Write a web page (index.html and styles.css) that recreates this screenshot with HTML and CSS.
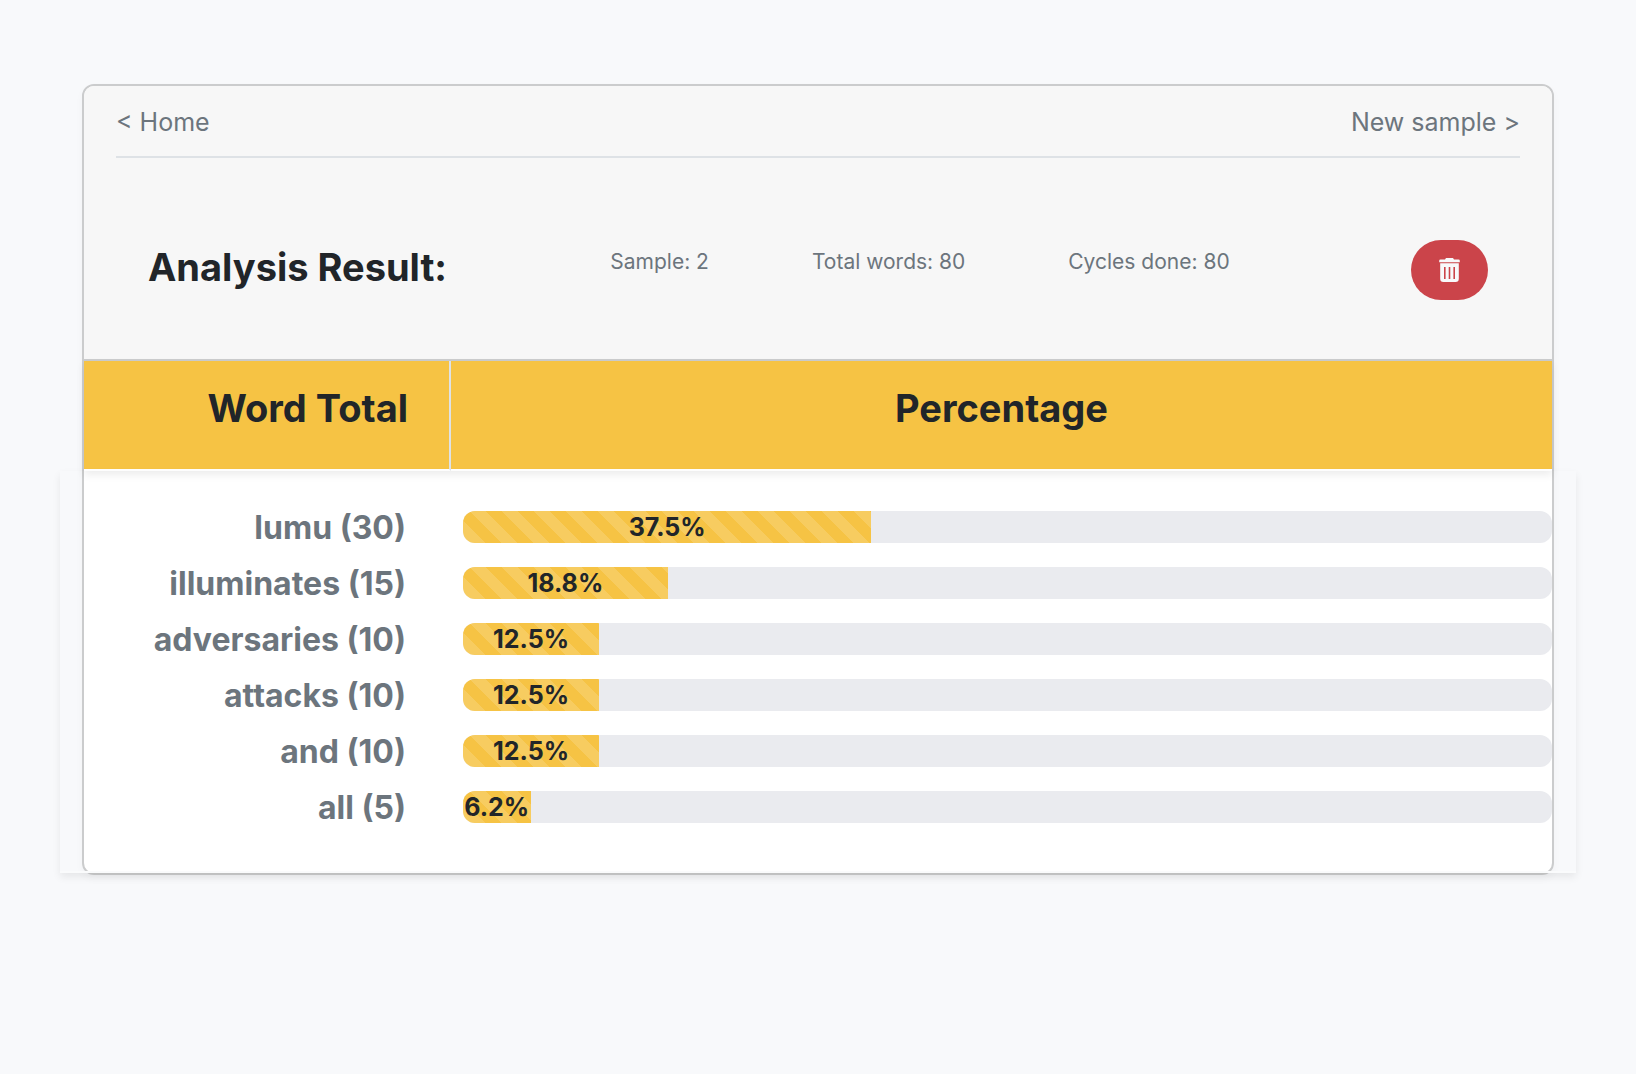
FILE: index.html
```html
<!DOCTYPE html>
<html lang="en">
<head>
  <meta charset="utf-8">
  <meta name="viewport" content="width=device-width, initial-scale=1">
  <title>Analysis Result</title>
  <link rel="stylesheet" href="styles.css">
</head>
<body>
  <main class="card">
    <header class="card-header">
      <nav class="nav">
        <a class="nav-link" href="#home">&lt; Home</a>
        <a class="nav-link" href="#new">New sample &gt;</a>
      </nav>
      <div class="summary">
        <h1 class="title">Analysis Result:</h1>
        <ul class="stats">
          <li>Sample: 2</li>
          <li>Total words: 80</li>
          <li>Cycles done: 80</li>
        </ul>
        <button class="delete" type="button" aria-label="Delete sample">
          <svg class="delete-icon" viewBox="0 0 21 24" aria-hidden="true">
            <path fill="currentColor" d="M1.500 1.500H6L7 0h7l1 1.500h4.500a1.300 1.300 0 0 1 1.300 1.300v1.400H.2V2.800a1.300 1.300 0 0 1 1.300-1.300z"/>
            <path fill="currentColor" fill-rule="evenodd" d="M1.200 5.300h18.600v15.500a3.200 3.200 0 0 1-3.200 3.200H4.400a3.200 3.200 0 0 1-3.200-3.200zM5 9v12h1.600V9zM9.700 9v12h1.600V9zM14.400 9v12H16V9z"/>
          </svg>
        </button>
      </div>
    </header>
    <table class="results">
      <thead>
        <tr>
          <th class="head head-word" scope="col">Word Total</th>
          <th class="head" scope="col">Percentage</th>
        </tr>
      </thead>
      <tbody>
        <tr>
          <th class="word" scope="row">lumu (30)</th>
          <td class="share"><div class="track"><div class="bar" style="width: 37.5%">37.5%</div></div></td>
        </tr>
        <tr>
          <th class="word" scope="row">illuminates (15)</th>
          <td class="share"><div class="track"><div class="bar" style="width: 18.8%">18.8%</div></div></td>
        </tr>
        <tr>
          <th class="word" scope="row">adversaries (10)</th>
          <td class="share"><div class="track"><div class="bar" style="width: 12.5%">12.5%</div></div></td>
        </tr>
        <tr>
          <th class="word" scope="row">attacks (10)</th>
          <td class="share"><div class="track"><div class="bar" style="width: 12.5%">12.5%</div></div></td>
        </tr>
        <tr>
          <th class="word" scope="row">and (10)</th>
          <td class="share"><div class="track"><div class="bar" style="width: 12.5%">12.5%</div></div></td>
        </tr>
        <tr>
          <th class="word" scope="row">all (5)</th>
          <td class="share"><div class="track"><div class="bar" style="width: 6.2%">6.2%</div></div></td>
        </tr>
      </tbody>
    </table>
  </main>
</body>
</html>
```

FILE: styles.css
```css
* {
  box-sizing: border-box;
}

body {
  margin: 0;
  padding: 84px 82px;
  background: #f8f9fb;
  color: #212529;
  font-family: Inter, "Liberation Sans", sans-serif;
}

.card {
  border: 2px solid #cbcccd;
  border-radius: 12px;
  background: #fff;
  box-shadow: 0 4px 8px rgba(0, 0, 0, 0.03);
}

.card-header {
  padding: 0 32px;
  border-bottom: 2px solid #cbcccd;
  border-radius: 10px 10px 0 0;
  background: #f7f7f7;
}

.nav {
  display: flex;
  justify-content: space-between;
  padding: 16px 0 14px;
  border-bottom: 2px solid #dee2e6;
}

.nav-link {
  color: #6c757d;
  font-size: 25px;
  line-height: 40px;
  text-decoration: none;
}

.summary {
  display: grid;
  grid-template-columns: 69fr 116fr 15fr;
  align-items: center;
  padding: 82px 32px 59px;
}

.title {
  margin: 0;
  padding-bottom: 6px;
  font-size: 38px;
  font-weight: 700;
  line-height: 48px;
  white-space: nowrap;
}

.stats {
  display: flex;
  gap: 103px;
  margin: 0;
  padding: 0 0 16px;
  list-style: none;
  color: #6c757d;
  font-size: 21px;
  line-height: 32px;
  white-space: nowrap;
}

.delete {
  display: flex;
  justify-content: center;
  align-items: center;
  justify-self: end;
  width: 77px;
  height: 60px;
  padding: 0;
  border: 0;
  border-radius: 30px;
  background: #cb444a;
  color: #f8f9fb;
}

.delete-icon {
  width: 21px;
  height: 24px;
}

.results {
  width: 100%;
  border-collapse: separate;
  border-spacing: 0;
  table-layout: fixed;
}

.results thead {
  box-shadow: 0 4px 8px rgba(0, 0, 0, 0.075);
}

.head {
  padding: 23px 0 37px;
  border-bottom: 2px solid #fff;
  background: #f6c344;
  background-clip: padding-box;
  font-size: 38px;
  font-weight: 700;
  line-height: 48px;
  text-align: center;
}

.head-word {
  width: 25%;
  padding-right: 41px;
  border-right: 2px solid #dee2e6;
  text-align: right;
}

.results tbody {
  position: relative;
}

/* Raised panel that reaches past both sides of the card */
.results tbody::after {
  content: "";
  position: absolute;
  inset: 0 -24px;
  border-bottom: 2px solid #fafbfc;
  box-shadow: 0 4px 8px rgba(0, 0, 0, 0.075);
  pointer-events: none;
}

.word {
  height: 56px;
  padding: 2px 45px 0 0;
  color: #6c757d;
  font-size: 32px;
  font-weight: 700;
  line-height: 40px;
  text-align: right;
}

.share {
  height: 56px;
  padding: 0 0 0 12px;
}

.results tbody tr:first-child > * {
  height: 84px;
  padding-top: 28px;
}

.results tbody tr:first-child > .word {
  padding-top: 30px;
}

.results tbody tr:last-child > * {
  height: 94px;
  padding-bottom: 38px;
}

.track {
  height: 32px;
  overflow: hidden;
  border-radius: 12px;
  background: #eaebef;
}

.bar {
  height: 32px;
  background-color: #f6c344;
  background-image: linear-gradient(45deg, rgba(255, 255, 255, 0.15) 25%, transparent 25%, transparent 50%, rgba(255, 255, 255, 0.15) 50%, rgba(255, 255, 255, 0.15) 75%, transparent 75%, transparent);
  background-position: 6px 0;
  background-size: 32px 32px;
  font-size: 25px;
  font-weight: 700;
  line-height: 33px;
  text-align: center;
  white-space: nowrap;
}
```
